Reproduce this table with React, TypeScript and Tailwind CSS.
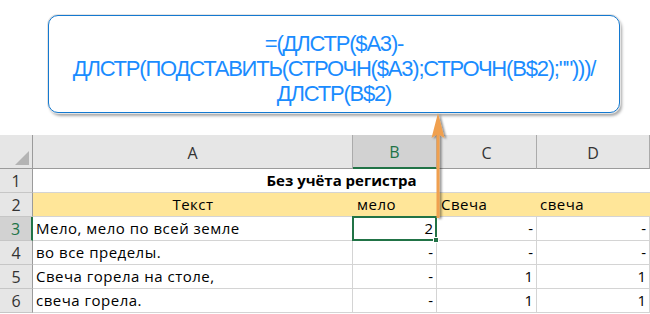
const cols = ["A", "B", "C", "D"];

type Row = { text: string; b: string; c: string; d: string };

const rows: Row[] = [
  { text: "Мело, мело по всей земле", b: "2", c: "-", d: "-" },
  { text: "во все пределы.", b: "-", c: "-", d: "-" },
  { text: "Свеча горела на столе,", b: "-", c: "1", d: "1" },
  { text: "свеча горела.", b: "-", c: "1", d: "1" },
];

const RowHead = ({ n, active }: { n: number; active?: boolean }) => (
  <div
    className={
      "flex items-center justify-center text-[16px] border-b border-b-[#c6c6c6] border-r " +
      (active
        ? "bg-[#d2d2d2] text-[#217346] border-r-2 border-r-[#217346]"
        : "bg-[#e6e6e6] text-[#333] border-r-[#9b9b9b]")
    }
  >
    {n}
  </div>
);

const Callout = () => (
  <div className="pl-[48px] pt-[15px] h-[135px]">
    <div className="w-[572px] h-[98px] pt-[8px] rounded-[10px] border-[1.5px] border-[#1479d0] bg-white shadow-[0_0_0_1px_#e4e4e4,2px_3px_3px_rgba(0,0,0,0.35)] flex flex-col items-center justify-center text-[#1a8cff] text-[22px] leading-[25px] tracking-[-1.2px] font-['Liberation_Sans',Arial,sans-serif]">
      <div>=(ДЛСТР($A3)-</div>
      <div>ДЛСТР(ПОДСТАВИТЬ(СТРОЧН($A3);СТРОЧН(B$2);"")))/</div>
      <div>ДЛСТР(B$2)</div>
    </div>
  </div>
);

export default function App() {
  return (
    <div className="relative w-[650px] h-[314px] overflow-hidden bg-white">
      <Callout />

      <div className="grid grid-cols-[33px_320px_84px_100px_113px] grid-rows-[34px_repeat(6,24px)] text-[15px] text-black font-['Open_Sans','Noto_Sans',sans-serif]">
        {/* column header row */}
        <div className="bg-[#e6e6e6] border-r border-b border-[#9b9b9b] flex items-end justify-end p-[3px]">
          <svg width="14" height="14" viewBox="0 0 14 14">
            <polygon points="14,0 14,14 0,14" fill="#b4b4b4" />
          </svg>
        </div>
        {cols.map((c) =>
          c === "B" ? (
            <div
              key={c}
              className="bg-[#d2d2d2] text-[#217346] text-[16px] border-r border-r-[#ababab] border-b-2 border-b-[#217346] flex items-center justify-center pt-[2px]"
            >
              {c}
            </div>
          ) : (
            <div
              key={c}
              className="bg-[#e6e6e6] text-[#333] text-[16px] border-r border-r-[#ababab] border-b border-b-[#9b9b9b] flex items-center justify-center pt-[2px]"
            >
              {c}
            </div>
          )
        )}

        {/* row 1: title centered across A:D */}
        <RowHead n={1} />
        <div className="col-span-4 bg-white border-b border-[#d4d4d4] flex items-center justify-center font-bold">
          Без учёта регистра
        </div>

        {/* row 2: yellow header */}
        <RowHead n={2} />
        <div className="bg-[#ffe699] border-b border-[#d4d4d4] flex items-center justify-center tracking-[0.5px]">Текст</div>
        <div className="bg-[#ffe699] border-b border-[#d4d4d4] flex items-center pl-[4px] tracking-[0.5px]">мело</div>
        <div className="bg-[#ffe699] border-b border-[#d4d4d4] flex items-center pl-[4px] tracking-[0.5px]">Свеча</div>
        <div className="bg-[#ffe699] border-b border-[#d4d4d4] flex items-center pl-[3px] tracking-[0.5px]">свеча</div>

        {rows.map((r, i) => {
          const n = i + 3;
          const cell = "border-r border-b border-[#d4d4d4] flex items-center";
          return [
            <RowHead key={"h" + n} n={n} active={n === 3} />,
            <div key={"a" + n} className={cell + " pl-[3px] whitespace-nowrap tracking-[0.5px]"}>
              {r.text}
            </div>,
            n === 3 ? (
              <div
                key={"b" + n}
                className="relative border-2 border-[#217346] flex items-center justify-end pr-[2px] -mt-px -ml-px"
              >
                {r.b}
                <span className="absolute -right-[4px] -bottom-[4px] w-[6px] h-[6px] bg-[#217346] border border-white" />
              </div>
            ) : (
              <div key={"b" + n} className={cell + " justify-end pr-[3px]"}>
                {r.b}
              </div>
            ),
            <div key={"c" + n} className={cell + " justify-end pr-[3px]"}>
              {r.c}
            </div>,
            <div key={"d" + n} className={cell + " justify-end pr-[3px]"}>
              {r.d}
            </div>,
          ];
        })}
      </div>

      {/* pointer from the formula box down to B2 */}
      <svg className="absolute left-[428px] top-[110px]" width="22" height="114" viewBox="0 0 22 114">
        <defs>
          <filter id="sh" x="-50%" y="-10%" width="200%" height="120%">
            <feDropShadow dx="2" dy="1" stdDeviation="1.2" floodColor="#000" floodOpacity="0.45" />
          </filter>
        </defs>
        <g filter="url(#sh)">
          <rect x="8.5" y="22" width="3" height="86" fill="#f0a050" />
          <polygon points="10,3 16.5,28 10,24 3.5,28" fill="#f0a050" />
        </g>
      </svg>
    </div>
  );
}
